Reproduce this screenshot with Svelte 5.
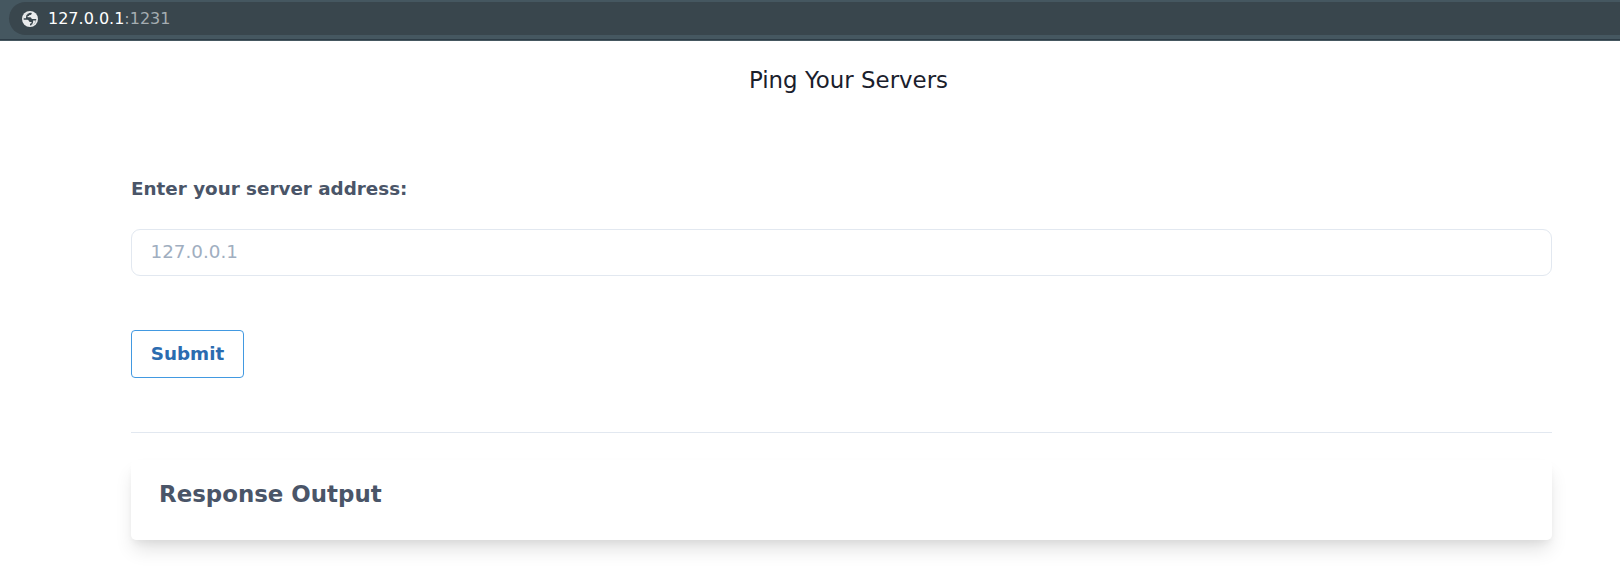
<script>
  let address = $state('');
</script>

<div class="browser">
  <div class="url">
    <svg viewBox="0 0 16 16" width="16" height="16" aria-hidden="true">
      <circle cx="8" cy="8" r="8" fill="#e9ebec" />
      <path d="M9.8 1.9 C9.7 3.7 8.6 3.8 7.5 4 C7.2 5 6.6 5.1 5.6 5.1 V6.3 H8.1 C9.5 6.4 9.2 7.9 10.2 8.1 H14.3 C14.2 11.6 11.5 14.3 8 14.4 V12.7 C9 12.6 9.6 12.1 9.6 11.1 H7.9 C6.7 10.7 6.9 8.8 5.3 8.7 H1.7 C1.4 4.7 5.2 1.1 9.8 1.9Z" fill="#39464d" />
      <path d="M1.6 7.2 C1.8 4.3 4 2.2 6.9 1.7 C6.5 2.8 5.4 3.2 4.4 4.1 L3.9 7.2Z M11.1 9.5 H14 C13.2 12.1 11.4 13.8 9.1 14.3 C9.5 13.3 11 12.8 11.1 10.9Z" fill="#e9ebec" />
    </svg>
    <span class="host">127.0.0.1<span class="port">:1231</span></span>
  </div>
</div>
<main>
  <h1>Ping Your Servers</h1>
  <form onsubmit={(e) => e.preventDefault()}>
    <label for="address">Enter your server address:</label>
    <input id="address" type="text" placeholder="127.0.0.1" bind:value={address} />
    <button type="submit">Submit</button>
  </form>
  <hr />
  <section>
    <h2>Response Output</h2>
  </section>
</main>

<style>
  :global(body) {
    margin: 0;
    background: #fff;
    font-family: "DejaVu Sans", sans-serif;
  }
  .browser {
    box-sizing: border-box;
    height: 41px;
    padding: 2px 0 0 9px;
    background: linear-gradient(#455760 39px, #2e3d47 39px, #2e3d47 40px, #455760 40px);
  }
  .url {
    display: flex;
    align-items: center;
    box-sizing: border-box;
    height: 33px;
    padding-left: 13px;
    gap: 10px;
    border-radius: 17px 0 0 17px;
    background: #39464d;
  }
  .host {
    color: #fff;
    font-size: 16px;
    line-height: 20px;
  }
  .port { color: #a5adb1; }
  main {
    box-sizing: border-box;
    min-height: 537px;
    padding: 21px 68px 0 131px;
  }
  h1 {
    margin: 0 0 0 14px;
    color: #1a202c;
    font-size: 22.9px;
    font-weight: 400;
    line-height: 36px;
    text-align: center;
  }
  form {
    display: flex;
    flex-direction: column;
    align-items: flex-start;
    padding-top: 77px;
  }
  label {
    color: #4a5568;
    font-size: 18.32px;
    font-weight: 700;
    line-height: 28px;
  }
  input {
    box-sizing: border-box;
    width: 100%;
    height: 47px;
    margin: 26px 0 0;
    padding: 0 18.5px 2px;
    border: 1px solid #e2e8f0;
    border-radius: 9px;
    background: #fff;
    color: #4a5568;
    font: 18.32px "DejaVu Sans", sans-serif;
    outline: none;
  }
  input::placeholder { color: #a0aec0; opacity: 1; }
  button {
    box-sizing: border-box;
    width: 113px;
    height: 48px;
    margin: 54px 0 0;
    padding: 0 0 1px;
    border: 1px solid #4299e1;
    border-radius: 4px;
    background: #fff;
    color: #2b6cb0;
    font: 700 18.32px "DejaVu Sans", sans-serif;
  }
  hr {
    height: 1px;
    margin: 54px 0 0;
    border: 0;
    background: #e2e8f0;
  }
  section {
    box-sizing: border-box;
    height: 80px;
    margin-top: 27px;
    padding: 17px 28px;
    border-radius: 5px;
    background: #fff;
    box-shadow: 0 12px 19px -3px rgba(0, 0, 0, 0.12), 0 5px 7px -2px rgba(0, 0, 0, 0.05);
  }
  h2 {
    margin: 0;
    color: #4a5568;
    font-size: 22.9px;
    font-weight: 700;
    line-height: 34px;
  }
</style>
